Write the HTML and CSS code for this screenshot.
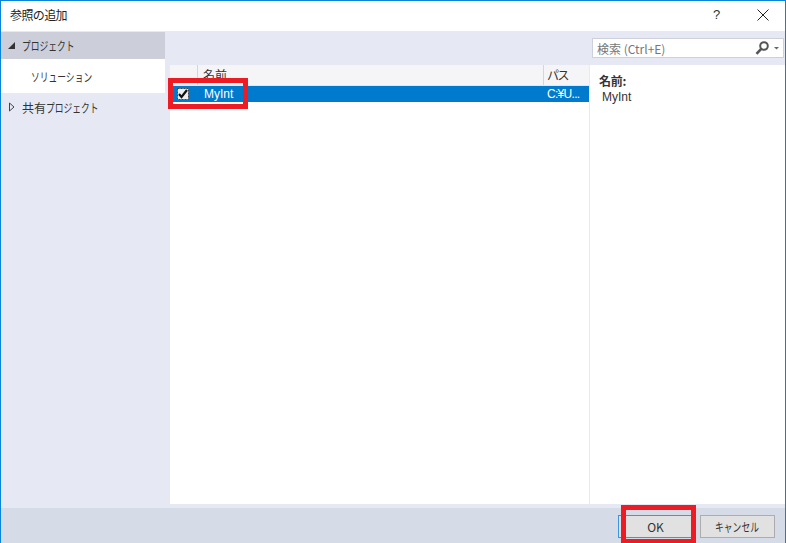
FILE: index.html
```html
<!DOCTYPE html>
<html lang="ja">
<head>
    <meta charset="UTF-8">
    <title>参照の追加</title>
    <link rel="stylesheet" href="styles.css">
</head>
<body>
    <div class="dialog">
        <div class="titlebar">
            <span class="title">参照の追加</span>
            <span class="help">?</span>
            <svg class="close" width="12" height="12" viewBox="0 0 12 12">
                <path d="M0.5 0.5L11.5 11.5M11.5 0.5L0.5 11.5" stroke="#222" stroke-width="1" fill="none"/>
            </svg>
        </div>
        <div class="main">
            <div class="sidebar">
                <div class="tree-item selected">
                    <svg class="arrow" width="8" height="8" viewBox="0 0 8 8"><path d="M0 7L7 7L7 0Z" fill="#333"/></svg>
                    <span class="kana">プロジェクト</span>
                </div>
                <div class="tree-child"><span class="kana">ソリューション</span></div>
                <div class="tree-item shared">
                    <svg class="arrow" width="8" height="10" viewBox="0 0 8 10"><path d="M1.5 1L6 5L1.5 9Z" fill="#e6e9f4" stroke="#444"/></svg>
                    <span class="tree-label">共有<span class="kana">プロジェクト</span></span>
                </div>
            </div>
            <div class="content">
                <div class="searchbar">
                    <div class="search">
                        <span class="search-text">検索 (Ctrl+E)</span>
                        <svg class="search-icon" width="28" height="14" viewBox="0 0 28 14">
                            <circle cx="9" cy="5" r="3.8" fill="none" stroke="#555" stroke-width="2"/>
                            <path d="M6.2 7.8L1.5 12.8" stroke="#555" stroke-width="2.6" fill="none"/>
                            <path d="M19 6L24 6L21.5 8.5Z" fill="#666"/>
                        </svg>
                    </div>
                </div>
                <div class="panels">
                    <div class="list">
                        <div class="list-head">
                            <div class="col-check"></div>
                            <div class="col-name">名前</div>
                            <div class="col-path">パス</div>
                        </div>
                        <div class="row">
                            <div class="col-check">
                                <svg width="12" height="12" viewBox="0 0 12 12">
                                    <rect x="0.5" y="0.5" width="11" height="11" fill="#eee" stroke="#444" stroke-dasharray="2 1"/>
                                    <path d="M2 6L4.5 9L10 2" stroke="#111" stroke-width="2.2" fill="none"/>
                                </svg>
                            </div>
                            <div class="col-name">MyInt</div>
                            <div class="col-path">C:¥U...</div>
                        </div>
                    </div>
                    <div class="info">
                        <div class="info-label">名前:</div>
                        <div class="info-value">MyInt</div>
                    </div>
                </div>
            </div>
        </div>
        <div class="footer">
            <button class="btn btn-ok">OK</button>
            <button class="btn"><span class="kana">キャンセル</span></button>
        </div>
        <div class="mark mark-row"></div>
        <div class="mark mark-ok"></div>
    </div>
</body>
</html>
```

FILE: styles.css
```css
html, body {
    margin: 0;
    padding: 0;
}
body {
    font-family: "Noto Sans CJK JP", "Liberation Sans", sans-serif;
    font-size: 12px;
    color: #333;
}
/* the screenshot's UI font has much narrower kana */
.kana {
    display: inline-block;
    transform: scaleX(0.73);
    transform-origin: left center;
}
.dialog {
    position: relative;
    width: 786px;
    height: 543px;
    box-sizing: border-box;
    border: 1px solid #0a84d8;
    border-bottom: none;
    background: #e6e9f4;
    display: flex;
    flex-direction: column;
    overflow: hidden;
}
.titlebar {
    height: 30px;
    flex: none;
    background: #fff;
    display: flex;
    align-items: center;
    padding-left: 9px;
    padding-bottom: 3px;
    box-sizing: border-box;
}
.title {
    flex: 1;
    letter-spacing: -0.6px;
    color: #222;
}
.help {
    font-family: "Liberation Sans", sans-serif;
    font-size: 13px;
    width: 12px;
    margin-right: 32px;
}
.close {
    margin-right: 16px;
}
.main {
    flex: 1;
    display: flex;
    min-height: 0;
}
.sidebar {
    width: 164px;
    flex: none;
    padding-top: 1px;
}
.tree-item {
    display: flex;
    align-items: center;
    height: 27px;
    padding-left: 7px;
    gap: 6px;
}
.tree-item.selected {
    background: #ccced9;
}
.tree-child {
    height: 34px;
    line-height: 35px;
    padding-left: 30px;
    background: #fff;
}
.tree-item.shared {
    height: 28px;
}
.tree-label {
    white-space: nowrap;
}
.content {
    flex: 1;
    display: flex;
    flex-direction: column;
    min-width: 0;
}
.searchbar {
    height: 34px;
    flex: none;
    display: flex;
    justify-content: flex-end;
    align-items: flex-start;
    padding-top: 7px;
    box-sizing: border-box;
}
.search {
    width: 192px;
    height: 20px;
    box-sizing: border-box;
    border: 1px solid #ccd0da;
    background: #fff;
    display: flex;
    align-items: center;
    justify-content: space-between;
    padding: 0 0 0 4px;
    margin-right: 1px;
}
.search-text {
    color: #777;
}
.panels {
    height: 439px;
    flex: none;
    display: flex;
    margin-left: 5px;
    background: #fff;
}
.list {
    width: 419px;
    flex: none;
    border-right: 1px solid #e8eaf0;
}
.list-head {
    display: flex;
    height: 21px;
    background: #f5f5f7;
    box-sizing: border-box;
    border-bottom: 1px solid #e4e6ec;
}
.list-head .col-check,
.list-head .col-name {
    border-right: 1px solid #d4d6dc;
}
.list-head .col-name,
.list-head .col-path {
    padding-top: 2px;
}
.list-head .col-path {
    letter-spacing: -1.5px;
}
.row {
    display: flex;
    height: 16px;
    align-items: center;
    background: #007acc;
    color: #fff;
}
.col-check {
    width: 28px;
    flex: none;
    box-sizing: border-box;
    display: flex;
    align-items: center;
    padding-left: 7px;
}
.col-name {
    width: 346px;
    flex: none;
    box-sizing: border-box;
    padding-left: 5px;
    line-height: 16px;
}
.col-path {
    flex: 1;
    padding-left: 3px;
    line-height: 16px;
    white-space: nowrap;
    overflow: hidden;
}
.row .col-name,
.row .col-path {
    font-family: "Liberation Sans", "Noto Sans CJK JP", sans-serif;
}
.row .col-name {
    padding-left: 6px;
}
.row .col-path {
    letter-spacing: -0.7px;
}
.info {
    flex: 1;
    padding: 8px 9px;
    line-height: 16px;
}
.info-label {
    font-weight: bold;
    letter-spacing: -0.3px;
}
.info-value {
    font-family: "Liberation Sans", sans-serif;
    padding-left: 3px;
}
.footer {
    height: 35px;
    flex: none;
    margin-left: -1px;
    background: #d6dbe8;
    display: flex;
    justify-content: flex-end;
    align-items: flex-start;
    gap: 7px;
    padding: 7px 10px 0 0;
    box-sizing: border-box;
}
.btn {
    width: 75px;
    height: 23px;
    box-sizing: border-box;
    border: 1px solid #adadad;
    background: #e1e1e1;
    font-family: inherit;
    font-size: 12px;
    color: #333;
    padding: 0;
}
.btn .kana {
    transform-origin: center;
}
.btn-ok {
    border: 1px solid #3a96dd;
}
/* red annotation boxes drawn over the dialog */
.mark {
    position: absolute;
    box-sizing: border-box;
    border: 5px solid #ed1c24;
}
.mark-row {
    left: 167px;
    top: 77px;
    width: 80px;
    height: 31px;
}
.mark-ok {
    left: 620px;
    top: 504px;
    width: 75px;
    height: 38px;
    border-bottom-width: 4px;
}
```
